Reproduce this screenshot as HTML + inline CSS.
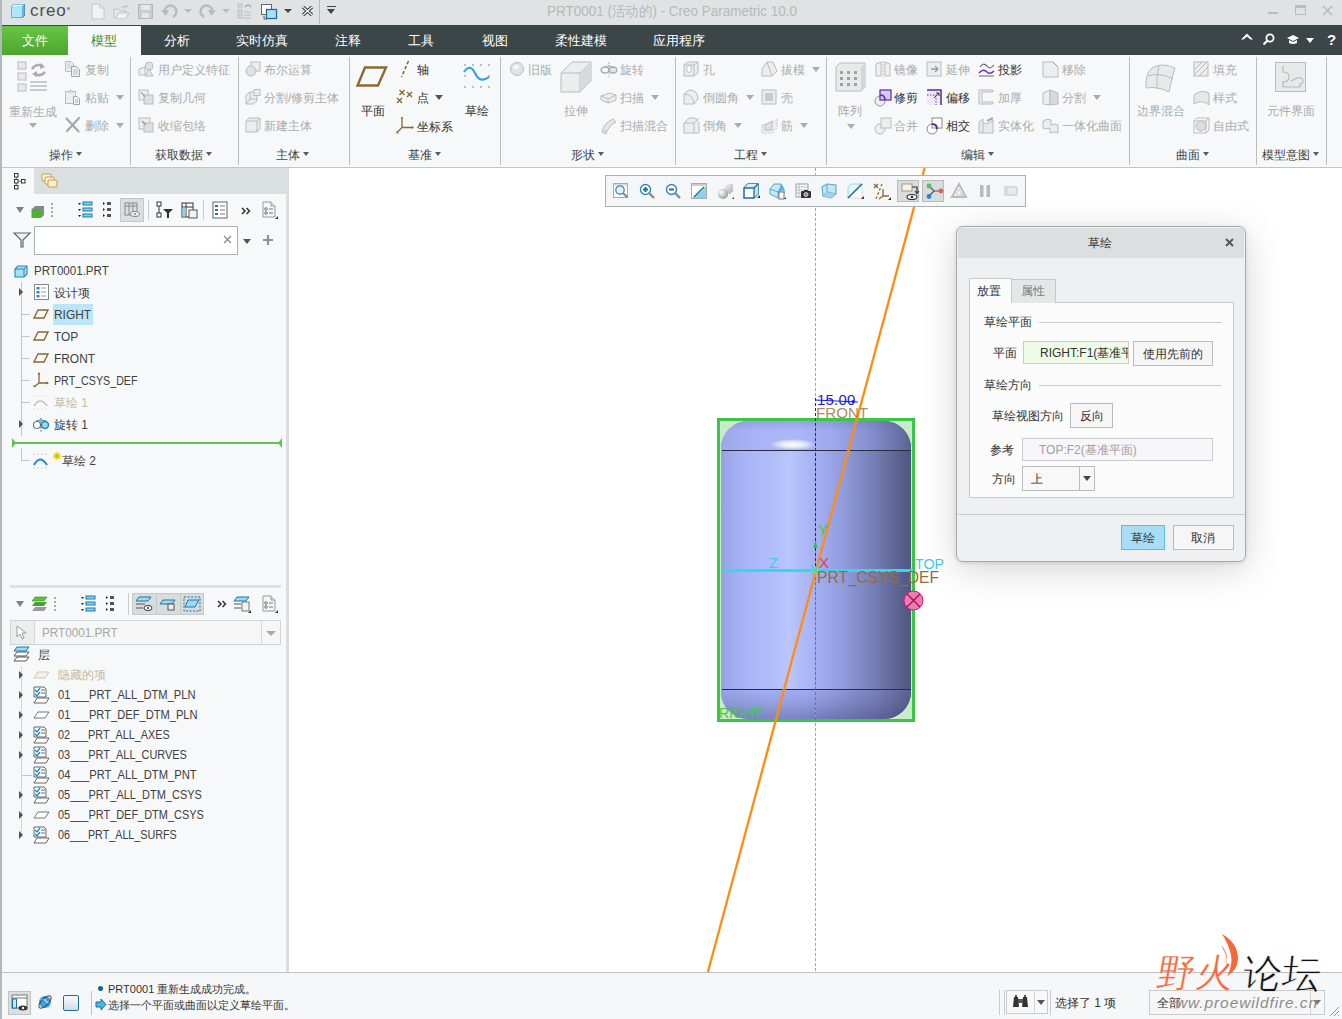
<!DOCTYPE html>
<html><head><meta charset="utf-8">
<style>
*{box-sizing:border-box;margin:0;padding:0}
html,body{width:1342px;height:1019px;overflow:hidden}
body{position:relative;background:#f5f7f8;font-family:"Liberation Sans",sans-serif;font-size:12px;color:#333}
.a{position:absolute}
.t{position:absolute;white-space:nowrap;line-height:14px;font-size:12px}
.tab{position:absolute;top:0;height:30px;line-height:32px;color:#fff;font-size:13px;white-space:nowrap}
.gl{position:absolute;font-size:12px;color:#444;white-space:nowrap;line-height:14px}
.dis{color:#a9adad}
svg{position:absolute;overflow:visible}
</style></head><body>
<div class="a" style="left:0px;top:0px;width:1342px;height:25px;background:#dfe3e3"></div>
<div class="a" style="left:0px;top:25px;width:1342px;height:30px;background:#3c4547"></div>
<div class="a" style="left:0px;top:55px;width:1342px;height:112px;background:#f6f8f9"></div>
<div class="a" style="left:0px;top:167px;width:1342px;height:1px;background:#bcc6c6"></div>
<div class="a" style="left:2px;top:168px;width:284px;height:804px;background:#f6f8f9"></div>
<div class="a" style="left:286px;top:168px;width:3px;height:804px;background:#dadede"></div>
<div class="a" style="left:289px;top:168px;width:1053px;height:804px;background:#ffffff"></div>
<div class="a" style="left:0px;top:972px;width:1342px;height:1px;background:#b9c3c3"></div>
<div class="a" style="left:2px;top:973px;width:1340px;height:46px;background:#f5f7f8"></div>
<div class="a" style="left:0px;top:0px;width:2px;height:1019px;background:#b3b8ba"></div>
<svg style="left:11px;top:3px" width="15" height="16" viewBox="0 0 15 16"><path d="M2.5 1 L14 1 L14 12.5 L11.5 15 L0.5 15 L0.5 3 Z" fill="#1f7fae"/><rect x="1" y="3" width="10.5" height="11.5" fill="#aee6f8"/><path d="M2.5 1.5 L13.5 1.5 L11.5 3 L1 3 Z" fill="#f4fbff"/><path d="M11.5 3 L13.5 1.5 L13.5 12 L11.5 14 Z" fill="#6fb6d6"/></svg>
<div class="t" style="left:30px;top:1px;font-size:17px;line-height:20px;color:#4a4f52;letter-spacing:0.9px">creo</div>
<div class="a" style="left:67px;top:7px;width:3px;height:3px;background:#8a8f92;border-radius:2px"></div>
<svg style="left:91px;top:3px" width="14" height="17" viewBox="0 0 14 17"><path d="M1 1 L9 1 L13 5 L13 16 L1 16 Z" fill="#f2f2f2" stroke="#c4c8c8"/><path d="M9 1 L9 5 L13 5" fill="none" stroke="#c4c8c8"/></svg>
<svg style="left:113px;top:4px" width="17" height="15" viewBox="0 0 17 15"><path d="M1 5 L6 5 L7 7 L13 7 L13 14 L1 14 Z" fill="#e8eaea" stroke="#bfc3c3"/><path d="M3 14 L5 9 L16 9 L13 14" fill="#f0f0f0" stroke="#bfc3c3"/><path d="M9 4 Q12 1 15 3" fill="none" stroke="#bfc3c3" stroke-width="1.5"/></svg>
<svg style="left:138px;top:4px" width="15" height="15" viewBox="0 0 15 15"><rect x="0.5" y="0.5" width="14" height="14" fill="#c9cdcd" stroke="#b4b8b8"/><rect x="3" y="1" width="9" height="5" fill="#e6e8e8"/><rect x="4" y="9" width="7" height="5" fill="#e6e8e8"/></svg>
<svg style="left:161px;top:5px" width="17" height="13" viewBox="0 0 17 13"><path d="M4 9 A6 6 0 1 1 12 12" fill="none" stroke="#b8bcbc" stroke-width="2.5"/><path d="M0 5 L5 11 L8 5 Z" fill="#b8bcbc"/></svg>
<div class="a" style="left:184px;top:9px;width:0;height:0;border-left:4px solid transparent;border-right:4px solid transparent;border-top:4px solid #b8bcbc"></div>
<svg style="left:199px;top:5px" width="17" height="13" viewBox="0 0 17 13"><path d="M13 9 A6 6 0 1 0 5 12" fill="none" stroke="#b8bcbc" stroke-width="2.5"/><path d="M17 5 L12 11 L9 5 Z" fill="#b8bcbc"/></svg>
<div class="a" style="left:222px;top:9px;width:0;height:0;border-left:4px solid transparent;border-right:4px solid transparent;border-top:4px solid #b8bcbc"></div>
<svg style="left:237px;top:3px" width="15" height="16" viewBox="0 0 15 16"><rect x="1" y="1" width="4" height="3" fill="none" stroke="#b8bcbc"/><rect x="1" y="7" width="4" height="3" fill="none" stroke="#b8bcbc"/><rect x="1" y="12" width="4" height="3" fill="none" stroke="#b8bcbc"/><path d="M7 9 L14 9 M7 12 L14 12 M7 15 L14 15" stroke="#b8bcbc"/><path d="M8 4 Q11 0 14 4" fill="none" stroke="#a8acac" stroke-width="1.5"/></svg>
<svg style="left:261px;top:4px" width="16" height="16" viewBox="0 0 16 16"><rect x="0.5" y="0.5" width="10" height="10" fill="#fff" stroke="#666"/><rect x="5.5" y="5.5" width="10" height="9" fill="#aee0f4" stroke="#1d6f9a" stroke-width="1.3"/><path d="M3 12 L3 15 L6 15" fill="none" stroke="#666"/></svg>
<div class="a" style="left:284px;top:9px;width:0;height:0;border-left:4px solid transparent;border-right:4px solid transparent;border-top:4px solid #444"></div>
<svg style="left:301px;top:5px" width="13" height="12" viewBox="0 0 13 12"><path d="M2 2 L11 10 M11 2 L2 10" stroke="#333" stroke-width="3.2"/><path d="M2 2 L11 10 M11 2 L2 10" stroke="#fff" stroke-width="1.2"/></svg>
<div class="a" style="left:319px;top:0px;width:1px;height:24px;background:#b5baba"></div>
<div class="a" style="left:327px;top:6px;width:9px;height:1px;background:#444"></div>
<div class="a" style="left:327px;top:9px;width:0;height:0;border-left:4px solid transparent;border-right:4px solid transparent;border-top:5px solid #444"></div>
<div class="t" style="left:547px;top:3px;font-size:14px;line-height:17px;color:#b4baba;transform:scaleX(0.9630);transform-origin:0 0">PRT0001 (活动的) - Creo Parametric 10.0</div>
<div class="a" style="left:1268px;top:12px;width:10px;height:2px;background:#b7bcbc"></div>
<div class="a" style="left:1295px;top:5px;width:11px;height:10px;border:1.5px solid #b7bcbc;border-top-width:3px"></div>
<svg style="left:1322px;top:5px" width="11" height="11" viewBox="0 0 11 11"><path d="M1 1 L10 10 M10 1 L1 10" stroke="#b7bcbc" stroke-width="1.6"/></svg>
<div class="a" style="left:2px;top:26px;width:66px;height:29px;background:linear-gradient(#67c545,#4ea42e)"></div>
<div class="tab" style="left:22px;top:25px">文件</div>
<div class="a" style="left:68px;top:26px;width:73px;height:29px;background:#f6f8f9"></div>
<div class="tab" style="left:91px;top:25px;color:#3f8a2c">模型</div>
<div class="tab" style="left:164px;top:25px">分析</div>
<div class="tab" style="left:236px;top:25px">实时仿真</div>
<div class="tab" style="left:335px;top:25px">注释</div>
<div class="tab" style="left:408px;top:25px">工具</div>
<div class="tab" style="left:482px;top:25px">视图</div>
<div class="tab" style="left:555px;top:25px">柔性建模</div>
<div class="tab" style="left:653px;top:25px">应用程序</div>
<svg style="left:1241px;top:33px" width="12" height="7" viewBox="0 0 12 7"><path d="M0 6.5 L6 0.5 L12 6.5 L9.5 6.5 L6 3.5 L2.5 6.5 Z" fill="#fff"/></svg>
<svg style="left:1262px;top:33px" width="13" height="13" viewBox="0 0 13 13"><circle cx="8" cy="5" r="3.6" fill="none" stroke="#fff" stroke-width="1.8"/><path d="M5.5 7.5 L1.5 11.5" stroke="#fff" stroke-width="2.2"/></svg>
<svg style="left:1286px;top:34px" width="14" height="11" viewBox="0 0 14 11"><path d="M1 4 L7 1 L13 4 L7 7 Z" fill="#fff"/><path d="M3 6 L3 9 Q7 11 11 9 L11 6 L7 8 Z" fill="#fff"/></svg>
<div class="a" style="left:1306px;top:38px;width:0;height:0;border-left:4px solid transparent;border-right:4px solid transparent;border-top:5px solid #fff"></div>
<div class="t" style="left:1327px;top:32px;font-size:15px;line-height:16px;color:#fff;font-weight:bold">?</div>
<svg style="left:17px;top:60px" width="32" height="34" viewBox="0 0 32 34"><rect x="1" y="2" width="8" height="7" fill="#e8eaea" stroke="#b8bcbc"/><rect x="1" y="13" width="8" height="7" fill="#e8eaea" stroke="#b8bcbc"/><rect x="1" y="24" width="8" height="7" fill="#e8eaea" stroke="#b8bcbc"/><path d="M13 22 L30 22 M13 26 L30 26 M13 30 L30 30" stroke="#b8bcbc" stroke-width="1.5"/><path d="M15 9 Q19 3 26 6" fill="none" stroke="#a8acac" stroke-width="2.5"/><path d="M28 12 Q24 17 17 14" fill="none" stroke="#a8acac" stroke-width="2.5"/><path d="M23 3 L28 7 L23 9 Z M20 11 L15 14 L20 17 Z" fill="#a8acac"/></svg>
<div class="t dis" style="left:9px;top:105px;">重新生成</div>
<div class="a" style="left:29px;top:123px;width:0;height:0;border-left:4px solid transparent;border-right:4px solid transparent;border-top:5px solid #a8acac"></div>
<svg style="left:65px;top:61px" width="16" height="16" viewBox="0 0 16 16"><path d="M0.5 0.5 L6 0.5 L8.5 3 L8.5 10.5 L0.5 10.5 Z" fill="#eceeee" stroke="#b8bcbc"/><path d="M2 3 L6 3 M2 5 L7 5 M2 7 L7 7" stroke="#ccc"/><path d="M6.5 5.5 L11.5 5.5 L14.5 8.5 L14.5 15.5 L6.5 15.5 Z" fill="#f0f1f1" stroke="#a0a4a4"/><path d="M8 9 L13 9 M8 11 L13 11 M8 13 L13 13" stroke="#b8bcbc"/></svg>
<div class="t dis" style="left:85px;top:63px;">复制</div>
<svg style="left:65px;top:89px" width="16" height="16" viewBox="0 0 16 16"><rect x="0.5" y="2.5" width="10" height="12" fill="#eceeee" stroke="#b8bcbc"/><path d="M3 3 L5.5 0.5 L8 3 Z" fill="#f4f4f4" stroke="#b8bcbc"/><path d="M8.5 7.5 L12 7.5 L14.5 10 L14.5 15.5 L8.5 15.5 Z" fill="#f2f3f3" stroke="#a0a4a4"/><path d="M10 11 L13 11 M10 13 L13 13" stroke="#b0b4b4"/></svg>
<div class="t dis" style="left:85px;top:91px;">粘贴</div>
<div class="a" style="left:116px;top:95px;width:0;height:0;border-left:4px solid transparent;border-right:4px solid transparent;border-top:5px solid #a8acac"></div>
<svg style="left:65px;top:117px" width="16" height="16" viewBox="0 0 16 16"><path d="M1.5 1.5 L13.5 14.5 M14 1 L2 14" stroke="#a4a8a8" stroke-width="2.2" stroke-linecap="round"/></svg>
<div class="t dis" style="left:85px;top:119px;">删除</div>
<div class="a" style="left:116px;top:123px;width:0;height:0;border-left:4px solid transparent;border-right:4px solid transparent;border-top:5px solid #a8acac"></div>
<svg style="left:138px;top:61px" width="16" height="16" viewBox="0 0 16 16"><path d="M1 8 L7 6 L7 14 L1 14 Z" fill="#eceeee" stroke="#b8bcbc"/><circle cx="11" cy="5" r="4" fill="#e0e2e2" stroke="#b8bcbc"/><path d="M7 15 L11 8 L15 15 Z" fill="#e4e6e6" stroke="#b8bcbc"/></svg>
<div class="t dis" style="left:158px;top:63px;">用户定义特征</div>
<svg style="left:138px;top:89px" width="16" height="16" viewBox="0 0 16 16"><rect x="1" y="1" width="9" height="10" fill="#eceeee" stroke="#b8bcbc"/><rect x="6" y="6" width="9" height="9" fill="#dde0e0" stroke="#b8bcbc"/><path d="M3 3 L7 8" stroke="#999" stroke-width="1.2"/></svg>
<div class="t dis" style="left:158px;top:91px;">复制几何</div>
<svg style="left:138px;top:117px" width="16" height="16" viewBox="0 0 16 16"><rect x="1" y="1" width="11" height="11" fill="#eceeee" stroke="#b8bcbc"/><rect x="6" y="6" width="9" height="9" fill="#dde0e0" stroke="#b8bcbc"/><path d="M4 4 L8 8" stroke="#999" stroke-width="1.2"/></svg>
<div class="t dis" style="left:158px;top:119px;">收缩包络</div>
<svg style="left:245px;top:61px" width="16" height="16" viewBox="0 0 16 16"><rect x="6" y="1" width="9" height="9" fill="#eceeee" stroke="#b8bcbc"/><circle cx="6" cy="10" r="5" fill="#dfe1e1" stroke="#b8bcbc"/></svg>
<div class="t dis" style="left:264px;top:63px;">布尔运算</div>
<svg style="left:245px;top:89px" width="16" height="16" viewBox="0 0 16 16"><path d="M1 6 L5 3 L12 3 L12 12 L8 15 L1 15 Z" fill="#eceeee" stroke="#b8bcbc"/><path d="M5 3 L5 10 L1 15 M5 10 L12 10" fill="none" stroke="#b8bcbc"/><rect x="9" y="0.5" width="6" height="6" fill="#eceeee" stroke="#b8bcbc"/></svg>
<div class="t dis" style="left:264px;top:91px;">分割/修剪主体</div>
<svg style="left:245px;top:117px" width="16" height="16" viewBox="0 0 16 16"><path d="M1 4 L4 1 L15 1 L15 12 L12 15 L1 15 Z" fill="#eceeee" stroke="#b8bcbc"/><path d="M1 4 L12 4 L12 15 M12 4 L15 1" fill="none" stroke="#b8bcbc"/></svg>
<div class="t dis" style="left:264px;top:119px;">新建主体</div>
<svg style="left:356px;top:66px" width="32" height="21" viewBox="0 0 32 21"><path d="M9 1.5 L30 1.5 L22 19.5 L1.5 19.5 Z" fill="none" stroke="#8b6a2c" stroke-width="2.4"/></svg>
<div class="t " style="left:361px;top:104px;">平面</div>
<svg style="left:400px;top:60px" width="10" height="18" viewBox="0 0 10 18"><path d="M8.5 1 L1.5 17" stroke="#8b6a2c" stroke-width="1.6" stroke-dasharray="3.5 2"/></svg>
<div class="t " style="left:417px;top:63px;">轴</div>
<svg style="left:396px;top:89px" width="17" height="15" viewBox="0 0 17 15"><path d="M3.5 1 L8.5 6 M8.5 1 L3.5 6 M11 3 L16 8 M16 3 L11 8 M1 9 L6 14 M6 9 L1 14" stroke="#8b6a2c" stroke-width="1.4"/></svg>
<div class="t " style="left:417px;top:91px;">点</div>
<div class="a" style="left:435px;top:95px;width:0;height:0;border-left:4px solid transparent;border-right:4px solid transparent;border-top:5px solid #555"></div>
<svg style="left:396px;top:116px" width="19" height="19" viewBox="0 0 19 19"><path d="M6 2 L6 11.5 L17 11.5 M6 11.5 L1 16.5" fill="none" stroke="#8b6a2c" stroke-width="1.3"/><path d="M4.5 2.5 L6 0.5 L7.5 2.5 Z M16 10 L18 11.5 L16 13 Z M0.5 15 L0.5 17.5 L3 17.5 Z" fill="#8b6a2c"/></svg>
<div class="t " style="left:417px;top:120px;">坐标系</div>
<svg style="left:463px;top:63px" width="28" height="26" viewBox="0 0 28 26"><g fill="#7a7a7a"><circle cx="2" cy="2" r="0.8"/><circle cx="10" cy="2" r="0.8"/><circle cx="18" cy="2" r="0.8"/><circle cx="26" cy="2" r="0.8"/><circle cx="2" cy="13" r="0.8"/><circle cx="26" cy="13" r="0.8"/><circle cx="2" cy="24" r="0.8"/><circle cx="10" cy="24" r="0.8"/><circle cx="18" cy="24" r="0.8"/><circle cx="26" cy="24" r="0.8"/></g><path d="M1 9 Q7 0 12 10 Q17 21 26 14" fill="none" stroke="#33a3d8" stroke-width="2.2"/></svg>
<div class="t " style="left:465px;top:104px;">草绘</div>
<svg style="left:509px;top:61px" width="16" height="16" viewBox="0 0 16 16"><circle cx="8" cy="8" r="6.5" fill="#e2e4e4" stroke="#b8bcbc"/><ellipse cx="7" cy="6" rx="3" ry="2" fill="#f6f6f6"/></svg>
<div class="t dis" style="left:528px;top:63px;">旧版</div>
<svg style="left:560px;top:61px" width="32" height="32" viewBox="0 0 32 32"><path d="M1 12 L12 1 L31 1 L31 20 L20 31 L1 31 Z" fill="#eceeee" stroke="#b8bcbc"/><path d="M1 12 L20 12 L31 1 M20 12 L20 31" fill="none" stroke="#b8bcbc"/><path d="M20 12 L31 1 L31 20 L20 31 Z" fill="#d7dada"/></svg>
<div class="t dis" style="left:564px;top:104px;">拉伸</div>
<svg style="left:600px;top:61px" width="18" height="16" viewBox="0 0 18 16"><ellipse cx="5" cy="9" rx="4" ry="3" fill="none" stroke="#a8acac" stroke-width="1.3"/><ellipse cx="13" cy="9" rx="4" ry="3" fill="#e2e4e4" stroke="#a8acac" stroke-width="1.3"/><path d="M9 1 L9 16" stroke="#a8acac" stroke-dasharray="2 1.5"/><path d="M5 6 Q9 3 13 6" fill="none" stroke="#a8acac"/></svg>
<div class="t dis" style="left:620px;top:63px;">旋转</div>
<svg style="left:600px;top:89px" width="18" height="16" viewBox="0 0 18 16"><path d="M1 7 L10 4 L16 6 L16 11 L8 14 L1 11 Z" fill="#eceeee" stroke="#b8bcbc"/><path d="M1 7 L8 10 L16 6 M8 10 L8 14" fill="none" stroke="#b8bcbc"/></svg>
<div class="t dis" style="left:620px;top:91px;">扫描</div>
<div class="a" style="left:651px;top:95px;width:0;height:0;border-left:4px solid transparent;border-right:4px solid transparent;border-top:5px solid #a8acac"></div>
<svg style="left:600px;top:117px" width="17" height="18" viewBox="0 0 17 18"><path d="M2 15 Q4 6 13 2 L16 5 Q8 9 6 17 Z" fill="#e4e6e6" stroke="#b8bcbc"/><circle cx="5" cy="14" r="1" fill="#b8bcbc"/></svg>
<div class="t dis" style="left:620px;top:119px;">扫描混合</div>
<svg style="left:683px;top:61px" width="17" height="16" viewBox="0 0 17 16"><path d="M1 4 L5 1 L15 1 L15 12 L11 15 L1 15 Z" fill="#eceeee" stroke="#b8bcbc"/><path d="M1 4 L11 4 L11 15 M11 4 L15 1" fill="none" stroke="#b8bcbc"/><ellipse cx="6" cy="8" rx="2.5" ry="3.5" fill="#fff" stroke="#b8bcbc"/></svg>
<div class="t dis" style="left:703px;top:63px;">孔</div>
<svg style="left:683px;top:89px" width="17" height="17" viewBox="0 0 17 17"><path d="M1 5 L6 1 Q15 1 15 10 L11 15 L1 15 Z" fill="#eceeee" stroke="#b8bcbc"/><path d="M1 5 Q10 5 11 15" fill="none" stroke="#b8bcbc"/></svg>
<div class="t dis" style="left:703px;top:91px;">倒圆角</div>
<div class="a" style="left:746px;top:95px;width:0;height:0;border-left:4px solid transparent;border-right:4px solid transparent;border-top:5px solid #a8acac"></div>
<svg style="left:683px;top:117px" width="17" height="17" viewBox="0 0 17 17"><path d="M1 6 L6 1 L12 1 L16 6 L16 16 L1 16 Z" fill="#eceeee" stroke="#b8bcbc"/><path d="M1 6 L11 6 L16 1 M11 6 L11 16" fill="none" stroke="#b8bcbc"/></svg>
<div class="t dis" style="left:703px;top:119px;">倒角</div>
<div class="a" style="left:734px;top:123px;width:0;height:0;border-left:4px solid transparent;border-right:4px solid transparent;border-top:5px solid #a8acac"></div>
<svg style="left:761px;top:61px" width="17" height="16" viewBox="0 0 17 16"><path d="M1 8 L6 1 L12 1 L16 10 L11 15 L1 15 Z" fill="#eceeee" stroke="#b8bcbc"/><path d="M6 1 L11 15" stroke="#b8bcbc" fill="none"/></svg>
<div class="t dis" style="left:781px;top:63px;">拔模</div>
<div class="a" style="left:812px;top:67px;width:0;height:0;border-left:4px solid transparent;border-right:4px solid transparent;border-top:5px solid #a8acac"></div>
<svg style="left:761px;top:89px" width="16" height="16" viewBox="0 0 16 16"><rect x="1" y="1" width="14" height="14" fill="#eceeee" stroke="#b8bcbc"/><rect x="4" y="4" width="8" height="8" fill="#c8cbcb"/></svg>
<div class="t dis" style="left:781px;top:91px;">壳</div>
<svg style="left:761px;top:117px" width="17" height="17" viewBox="0 0 17 17"><path d="M1 8 L1 16 L11 16 L16 11 L16 2 L11 6 Z" fill="#eceeee" stroke="#b8bcbc" stroke-dasharray="1 1"/><path d="M4 8 L11 4 L11 13 L4 13 Z" fill="#dfe1e1" stroke="#b8bcbc"/></svg>
<div class="t dis" style="left:781px;top:119px;">筋</div>
<div class="a" style="left:800px;top:123px;width:0;height:0;border-left:4px solid transparent;border-right:4px solid transparent;border-top:5px solid #a8acac"></div>
<svg style="left:835px;top:62px" width="31" height="30" viewBox="0 0 31 30"><path d="M1 5 L5 1 L30 1 L30 25 L26 29 L1 29 Z" fill="#e8eaea" stroke="#b8bcbc"/><path d="M26 5 L30 1 L30 25 L26 29 Z" fill="#d4d7d7"/><g fill="#9ea2a2"><rect x="5" y="9" width="3" height="3"/><rect x="12" y="9" width="3" height="3"/><rect x="19" y="9" width="3" height="3"/><rect x="5" y="15" width="3" height="3"/><rect x="12" y="15" width="3" height="3"/><rect x="19" y="15" width="3" height="3"/><rect x="5" y="21" width="3" height="3"/><rect x="12" y="21" width="3" height="3"/><rect x="19" y="21" width="3" height="3"/></g></svg>
<div class="t dis" style="left:838px;top:104px;">阵列</div>
<div class="a" style="left:847px;top:124px;width:0;height:0;border-left:4px solid transparent;border-right:4px solid transparent;border-top:5px solid #a8acac"></div>
<svg style="left:875px;top:61px" width="16" height="16" viewBox="0 0 16 16"><path d="M1 3 L6 1 L6 15 L1 15 Z M15 3 L10 1 L10 15 L15 15 Z" fill="#f0f0f0" stroke="#b8bcbc"/><path d="M8 0 L8 16" stroke="#b8bcbc" stroke-dasharray="2 1"/></svg>
<div class="t dis" style="left:894px;top:63px;">镜像</div>
<svg style="left:874px;top:89px" width="18" height="18" viewBox="0 0 18 18"><circle cx="6" cy="12" r="5" fill="#eee" stroke="#999"/><rect x="6" y="1" width="11" height="10" fill="#d7c8f5" stroke="#5a2a9a" stroke-width="1.2"/><path d="M6 6 Q11 6 11 11" fill="none" stroke="#5a2a9a" stroke-width="1.5"/></svg>
<div class="t " style="left:894px;top:91px;">修剪</div>
<svg style="left:874px;top:117px" width="18" height="18" viewBox="0 0 18 18"><circle cx="6" cy="12" r="5" fill="#eee" stroke="#bbb"/><rect x="7" y="1" width="10" height="10" fill="#eee" stroke="#bbb"/></svg>
<div class="t dis" style="left:894px;top:119px;">合并</div>
<svg style="left:926px;top:61px" width="16" height="16" viewBox="0 0 16 16"><rect x="1" y="1" width="14" height="14" fill="#eceeee" stroke="#b8bcbc"/><path d="M5 8 L12 8 M9 5 L12 8 L9 11" fill="none" stroke="#999" stroke-width="1.3"/></svg>
<div class="t dis" style="left:946px;top:63px;">延伸</div>
<svg style="left:926px;top:89px" width="17" height="17" viewBox="0 0 17 17"><rect x="1" y="1" width="15" height="15" fill="#efe8fb" stroke="none"/><path d="M1 1 L15 1 L15 16" fill="none" stroke="#5a2a9a" stroke-width="1.5"/><path d="M1 6 L10 6 L10 16" fill="none" stroke="#555" stroke-dasharray="1.5 1.5"/><path d="M8 9 L13 4 M10 4 L13 4 L13 7" fill="none" stroke="#333"/></svg>
<div class="t " style="left:946px;top:91px;">偏移</div>
<svg style="left:926px;top:117px" width="17" height="18" viewBox="0 0 17 18"><circle cx="6" cy="12" r="5" fill="#fff" stroke="#888"/><rect x="6" y="1" width="10" height="10" fill="#fff" stroke="#888"/><path d="M6 7 Q11 7 11 12" fill="none" stroke="#5a2a9a" stroke-width="2"/></svg>
<div class="t " style="left:946px;top:119px;">相交</div>
<svg style="left:978px;top:61px" width="18" height="17" viewBox="0 0 18 17"><path d="M2 6 Q5 1 9 5 Q12 9 16 4" fill="none" stroke="#666" stroke-width="1.2"/><path d="M1 12 Q5 7 9 11 Q12 14 16 10" fill="none" stroke="#7a2ac0" stroke-width="1.5"/><path d="M1 15 L16 15" stroke="#666"/></svg>
<div class="t " style="left:998px;top:63px;">投影</div>
<svg style="left:978px;top:89px" width="16" height="16" viewBox="0 0 16 16"><path d="M1 1 L15 1 L15 3 L4 3 L4 13 L15 13 L15 15 L1 15 Z" fill="#eceeee" stroke="#b8bcbc"/></svg>
<div class="t dis" style="left:998px;top:91px;">加厚</div>
<svg style="left:978px;top:117px" width="17" height="17" viewBox="0 0 17 17"><path d="M1 5 L5 2 L5 16 L1 16 Z M5 16 L15 16 L15 3 Q10 8 5 6" fill="#e8eaea" stroke="#b8bcbc"/><path d="M9 4 L15 1" stroke="#a8acac" stroke-width="2"/></svg>
<div class="t dis" style="left:998px;top:119px;">实体化</div>
<svg style="left:1042px;top:61px" width="17" height="17" viewBox="0 0 17 17"><path d="M1 1 L11 1 L16 6 L16 16 L1 16 Z" fill="#eceeee" stroke="#b8bcbc"/><path d="M11 1 L16 6" stroke="#999"/></svg>
<div class="t dis" style="left:1062px;top:63px;">移除</div>
<svg style="left:1042px;top:89px" width="17" height="17" viewBox="0 0 17 17"><path d="M1 4 L8 1 L8 16 L1 15 Z" fill="#eceeee" stroke="#b8bcbc"/><path d="M8 1 L16 4 L16 15 L8 16 Z" fill="#d8dada" stroke="#b8bcbc"/></svg>
<div class="t dis" style="left:1062px;top:91px;">分割</div>
<div class="a" style="left:1093px;top:95px;width:0;height:0;border-left:4px solid transparent;border-right:4px solid transparent;border-top:5px solid #a8acac"></div>
<svg style="left:1042px;top:117px" width="17" height="17" viewBox="0 0 17 17"><path d="M1 4 Q5 1 9 3 L9 8 Q13 6 16 8 L16 16 Q12 14 8 16 L8 11 Q4 13 1 11 Z" fill="#eceeee" stroke="#b8bcbc"/></svg>
<div class="t dis" style="left:1062px;top:119px;">一体化曲面</div>
<svg style="left:1144px;top:62px" width="33" height="31" viewBox="0 0 33 31"><path d="M2 26 Q1 12 8 6 Q18 0 31 6 Q27 18 25 30 Q14 24 2 26 Z" fill="#e8eaea" stroke="#b8bcbc"/><path d="M15 3 Q12 15 13 27 M4 14 Q16 10 29 17" fill="none" stroke="#b8bcbc"/></svg>
<div class="t dis" style="left:1137px;top:104px;">边界混合</div>
<svg style="left:1193px;top:61px" width="16" height="16" viewBox="0 0 16 16"><rect x="1" y="1" width="14" height="14" fill="#eceeee" stroke="#b8bcbc"/><path d="M1 9 L9 1 M1 14 L14 1 M6 15 L15 6" stroke="#b8bcbc"/></svg>
<div class="t dis" style="left:1213px;top:63px;">填充</div>
<svg style="left:1193px;top:89px" width="17" height="17" viewBox="0 0 17 17"><path d="M1 15 L1 6 Q8 0 16 4 L16 16 Q9 10 1 15 Z" fill="#e6e8e8" stroke="#b8bcbc"/></svg>
<div class="t dis" style="left:1213px;top:91px;">样式</div>
<svg style="left:1193px;top:117px" width="17" height="17" viewBox="0 0 17 17"><rect x="1" y="4" width="12" height="12" fill="none" stroke="#b8bcbc"/><path d="M1 4 L4 1 L16 1 L16 13 L13 16 M13 4 L16 1" fill="none" stroke="#b8bcbc"/><circle cx="8" cy="9" r="5" fill="#dcdede" stroke="#b8bcbc"/></svg>
<div class="t dis" style="left:1213px;top:119px;">自由式</div>
<svg style="left:1275px;top:62px" width="31" height="30" viewBox="0 0 31 30"><rect x="0.5" y="0.5" width="30" height="29" fill="#e8eaea" stroke="#b8bcbc"/><path d="M8 4 L8 10 Q14 10 14 15 Q14 20 8 20 L8 25 L25 25 L25 22 Q28 22 28 18 Q26 14 20 17 L16 19" fill="none" stroke="#b5b9b9" stroke-width="1.2"/></svg>
<div class="t dis" style="left:1267px;top:104px;">元件界面</div>
<div class="gl" style="left:49px;top:148px">操作</div>
<div class="a" style="left:76px;top:152px;width:0;height:0;border-left:3.5px solid transparent;border-right:3.5px solid transparent;border-top:4px solid #5c5c5c"></div>
<div class="gl" style="left:155px;top:148px">获取数据</div>
<div class="a" style="left:206px;top:152px;width:0;height:0;border-left:3.5px solid transparent;border-right:3.5px solid transparent;border-top:4px solid #5c5c5c"></div>
<div class="gl" style="left:276px;top:148px">主体</div>
<div class="a" style="left:303px;top:152px;width:0;height:0;border-left:3.5px solid transparent;border-right:3.5px solid transparent;border-top:4px solid #5c5c5c"></div>
<div class="gl" style="left:408px;top:148px">基准</div>
<div class="a" style="left:435px;top:152px;width:0;height:0;border-left:3.5px solid transparent;border-right:3.5px solid transparent;border-top:4px solid #5c5c5c"></div>
<div class="gl" style="left:571px;top:148px">形状</div>
<div class="a" style="left:598px;top:152px;width:0;height:0;border-left:3.5px solid transparent;border-right:3.5px solid transparent;border-top:4px solid #5c5c5c"></div>
<div class="gl" style="left:734px;top:148px">工程</div>
<div class="a" style="left:761px;top:152px;width:0;height:0;border-left:3.5px solid transparent;border-right:3.5px solid transparent;border-top:4px solid #5c5c5c"></div>
<div class="gl" style="left:961px;top:148px">编辑</div>
<div class="a" style="left:988px;top:152px;width:0;height:0;border-left:3.5px solid transparent;border-right:3.5px solid transparent;border-top:4px solid #5c5c5c"></div>
<div class="gl" style="left:1176px;top:148px">曲面</div>
<div class="a" style="left:1203px;top:152px;width:0;height:0;border-left:3.5px solid transparent;border-right:3.5px solid transparent;border-top:4px solid #5c5c5c"></div>
<div class="gl" style="left:1262px;top:148px">模型意图</div>
<div class="a" style="left:1313px;top:152px;width:0;height:0;border-left:3.5px solid transparent;border-right:3.5px solid transparent;border-top:4px solid #5c5c5c"></div>
<div class="a" style="left:130px;top:57px;width:1px;height:108px;background:#b9bfbf"></div>
<div class="a" style="left:238px;top:57px;width:1px;height:108px;background:#b9bfbf"></div>
<div class="a" style="left:349px;top:57px;width:1px;height:108px;background:#b9bfbf"></div>
<div class="a" style="left:500px;top:57px;width:1px;height:108px;background:#b9bfbf"></div>
<div class="a" style="left:675px;top:57px;width:1px;height:108px;background:#b9bfbf"></div>
<div class="a" style="left:826px;top:57px;width:1px;height:108px;background:#b9bfbf"></div>
<div class="a" style="left:1129px;top:57px;width:1px;height:108px;background:#b9bfbf"></div>
<div class="a" style="left:1256px;top:57px;width:1px;height:108px;background:#b9bfbf"></div>
<div class="a" style="left:1326px;top:57px;width:1px;height:108px;background:#b9bfbf"></div>
<div class="a" style="left:34px;top:168px;width:252px;height:26px;background:#dadfdf"></div>
<svg style="left:13px;top:172px" width="13" height="18" viewBox="0 0 13 18"><g fill="#fff" stroke="#333" stroke-width="1"><rect x="1.5" y="1.5" width="3.5" height="3.5"/><rect x="1.5" y="7.5" width="3.5" height="3.5"/><rect x="1.5" y="13.5" width="3.5" height="3.5"/><rect x="8.5" y="7.5" width="3.5" height="3.5"/></g><path d="M3.25 5 L3.25 7.5 M3.25 11 L3.25 13.5 M5 9.25 L8.5 9.25" stroke="#555" stroke-width="0.8"/></svg>
<svg style="left:41px;top:173px" width="17" height="16" viewBox="0 0 17 16"><rect x="1" y="1" width="9" height="7" rx="1" fill="#fdf3dc" stroke="#c89a4a"/><rect x="4" y="4" width="9" height="7" rx="1" fill="#fdf3dc" stroke="#c89a4a"/><rect x="7" y="7" width="9" height="7" rx="1" fill="#fdf0d0" stroke="#c89a4a"/></svg>
<div class="a" style="left:16px;top:207px;width:0;height:0;border-left:4px solid transparent;border-right:4px solid transparent;border-top:6px solid #808080"></div>
<svg style="left:31px;top:205px" width="14" height="14" viewBox="0 0 14 14"><path d="M1 4 L4 1 L13 1 L13 10 L10 13 L1 13 Z" fill="#888"/><rect x="0.5" y="4" width="9.5" height="9" fill="#4cb03a"/></svg>
<svg style="left:51px;top:203px" width="3" height="15" viewBox="0 0 3 15"><g fill="#aaa"><rect x="0" y="0" width="2" height="2"/><rect x="0" y="4" width="2" height="2"/><rect x="0" y="8" width="2" height="2"/><rect x="0" y="12" width="2" height="2"/></g></svg>
<svg style="left:77px;top:201px" width="16" height="18" viewBox="0 0 16 18"><g fill="#7fd4f2" stroke="#1b78a8"><rect x="6" y="1" width="9" height="3"/><rect x="6" y="7" width="9" height="3"/><rect x="6" y="13" width="9" height="3"/></g><path d="M1 2 L4 2 L2.5 4 Z M1 8 L4 8 L2.5 10 Z M1 14 L4 14 L2.5 16 Z" fill="#222"/></svg>
<svg style="left:102px;top:201px" width="10" height="18" viewBox="0 0 10 18"><g fill="#555"><rect x="5" y="1" width="4" height="3"/><rect x="5" y="7" width="4" height="3"/><rect x="5" y="13" width="4" height="3"/></g><path d="M1 1 L3 2.5 L1 4 Z M1 7 L3 8.5 L1 10 Z M1 13 L3 14.5 L1 16 Z" fill="#222"/></svg>
<div class="a" style="left:120px;top:198px;width:24px;height:24px;background:#dcdfe0;border:1px solid #c2c6c6"></div>
<svg style="left:124px;top:202px" width="16" height="16" viewBox="0 0 16 16"><rect x="1" y="1" width="12" height="12" fill="none" stroke="#888"/><path d="M1 4 L13 4 M5 1 L5 13 M9 1 L9 13" stroke="#888"/><ellipse cx="11" cy="12" rx="4.5" ry="2.5" fill="#eee" stroke="#888"/><circle cx="11" cy="12" r="1" fill="#888"/></svg>
<div class="a" style="left:148px;top:200px;width:1px;height:20px;background:#c8cccc"></div>
<svg style="left:156px;top:201px" width="18" height="18" viewBox="0 0 18 18"><rect x="1" y="1" width="4" height="4" fill="#fff" stroke="#333"/><rect x="1" y="12" width="4" height="4" fill="#fff" stroke="#333"/><path d="M3 5 L3 12" stroke="#333"/><path d="M7 8 L17 8 L13 12 L13 17 L11 17 L11 12 Z" fill="#333"/></svg>
<svg style="left:181px;top:202px" width="17" height="17" viewBox="0 0 17 17"><rect x="1" y="1" width="11" height="14" fill="#fff" stroke="#333"/><path d="M1 5 L12 5 M5 1 L5 15" stroke="#333"/><rect x="1.5" y="5.5" width="3" height="9" fill="#8fd4ee"/><rect x="8" y="8" width="8" height="8" fill="#f4f4f4" stroke="#555"/></svg>
<div class="a" style="left:203px;top:200px;width:1px;height:20px;background:#c8cccc"></div>
<svg style="left:212px;top:201px" width="16" height="18" viewBox="0 0 16 18"><rect x="1" y="1" width="14" height="16" fill="#fff" stroke="#666"/><g fill="#1b78a8"><rect x="3" y="4" width="3" height="2"/><rect x="3" y="8" width="3" height="2"/><rect x="3" y="12" width="3" height="2"/></g><path d="M8 5 L13 5 M8 9 L13 9 M8 13 L13 13" stroke="#777"/></svg>
<svg style="left:241px;top:207px" width="10" height="8" viewBox="0 0 10 8"><path d="M1 1 L4 4 L1 7 M5.5 1 L8.5 4 L5.5 7" fill="none" stroke="#333" stroke-width="1.5"/></svg>
<svg style="left:262px;top:201px" width="16" height="19" viewBox="0 0 16 19"><path d="M1 1 L9 1 L13 5 L13 16 L1 16 Z" fill="#f4f6f7" stroke="#999"/><path d="M9 1 L9 5 L13 5" fill="#d8e6ee" stroke="#999"/><circle cx="4" cy="8" r="1.3" fill="none" stroke="#777"/><circle cx="4" cy="12" r="1.3" fill="none" stroke="#777"/><path d="M7 8 L11 8 M7 12 L11 12" stroke="#777"/><path d="M13 18 L16 18 L16 15 Z" fill="#333"/></svg>
<svg style="left:13px;top:232px" width="18" height="16" viewBox="0 0 18 16"><path d="M1 1 L17 1 L10 8 L10 15 L8 15 L8 8 Z" fill="#f0f0f0" stroke="#666" stroke-width="1.2"/></svg>
<div class="a" style="left:34px;top:226px;width:204px;height:29px;background:#fff;border:1px solid #aab4b4"></div>
<svg style="left:223px;top:235px" width="9" height="9" viewBox="0 0 9 9"><path d="M1 1 L8 8 M8 1 L1 8" stroke="#888" stroke-width="1.2"/></svg>
<div class="a" style="left:243px;top:239px;width:0;height:0;border-left:4px solid transparent;border-right:4px solid transparent;border-top:5px solid #555"></div>
<svg style="left:262px;top:234px" width="12" height="12" viewBox="0 0 12 12"><path d="M6 1 L6 11 M1 6 L11 6" stroke="#909090" stroke-width="2.2"/></svg>
<svg style="left:14px;top:265px" width="14" height="13" viewBox="0 0 14 13"><path d="M1 4 L4 1 L13 1 L13 9 L10 12 L1 12 Z" fill="#a9e0f4" stroke="#2787b8" stroke-width="1.1"/><path d="M1 4 L10 4 L10 12 M10 4 L13 1" fill="none" stroke="#2787b8"/></svg>
<div class="t" style="left:34px;top:264px;font-size:12px;line-height:14px;color:#404040;transform:scaleX(0.9638);transform-origin:0 0">PRT0001.PRT</div>
<div class="a" style="left:21px;top:282px;width:1px;height:154px;background:#c2c6c6"></div>
<svg style="left:19px;top:288px" width="4" height="8" viewBox="0 0 4 8"><path d="M0 0 L4 4 L0 8 Z" fill="#505050"/></svg>
<svg style="left:34px;top:284px" width="15" height="16" viewBox="0 0 15 16"><rect x="0.5" y="0.5" width="14" height="15" fill="#fff" stroke="#888"/><g fill="#2a86c6"><rect x="2.5" y="3" width="3" height="2.5"/><rect x="2.5" y="7" width="3" height="2.5"/><rect x="2.5" y="11" width="3" height="2.5"/></g><path d="M7 4 L12 4 M7 8 L12 8 M7 12 L12 12" stroke="#999"/></svg>
<div class="t" style="left:54px;top:286px;font-size:12px;line-height:14px;color:#404040">设计项</div>
<div class="a" style="left:22px;top:314px;width:8px;height:1px;background:#c2c6c6"></div>
<svg style="left:33px;top:309px" width="16" height="10" viewBox="0 0 16 10"><path d="M5 1 L15 1 L11 9 L1 9 Z" fill="none" stroke="#8b6a2c" stroke-width="1.4"/></svg>
<div class="a" style="left:53px;top:304px;width:40px;height:21px;background:#bde5f9"></div>
<div class="t" style="left:54px;top:308px;font-size:12px;line-height:14px;color:#404040;transform:scaleX(0.9908);transform-origin:0 0">RIGHT</div>
<div class="a" style="left:22px;top:336px;width:8px;height:1px;background:#c2c6c6"></div>
<svg style="left:33px;top:331px" width="16" height="10" viewBox="0 0 16 10"><path d="M5 1 L15 1 L11 9 L1 9 Z" fill="none" stroke="#8b6a2c" stroke-width="1.4"/></svg>
<div class="t" style="left:54px;top:330px;font-size:12px;line-height:14px;color:#404040;transform:scaleX(0.9937);transform-origin:0 0">TOP</div>
<div class="a" style="left:22px;top:358px;width:8px;height:1px;background:#c2c6c6"></div>
<svg style="left:33px;top:353px" width="16" height="10" viewBox="0 0 16 10"><path d="M5 1 L15 1 L11 9 L1 9 Z" fill="none" stroke="#8b6a2c" stroke-width="1.4"/></svg>
<div class="t" style="left:54px;top:352px;font-size:12px;line-height:14px;color:#404040;transform:scaleX(0.9921);transform-origin:0 0">FRONT</div>
<div class="a" style="left:22px;top:380px;width:8px;height:1px;background:#c2c6c6"></div>
<svg style="left:33px;top:372px" width="16" height="16" viewBox="0 0 16 16"><path d="M6 1 L6 11 L15 11 M6 11 L1 15" fill="none" stroke="#8b6a2c" stroke-width="1.3"/><path d="M4.5 2.5 L6 0 L7.5 2.5 Z M13 9.5 L16 11 L13 12.5 Z M0 14 L2.5 15.5 L1 13 Z" fill="#8b6a2c"/></svg>
<div class="t" style="left:54px;top:374px;font-size:12px;line-height:14px;color:#404040;transform:scaleX(0.8901);transform-origin:0 0">PRT_CSYS_DEF</div>
<div class="a" style="left:22px;top:402px;width:8px;height:1px;background:#c2c6c6"></div>
<svg style="left:33px;top:395px" width="16" height="16" viewBox="0 0 16 16"><g fill="#c8c8c8"><circle cx="1" cy="1" r="0.6"/><circle cx="5" cy="1" r="0.6"/><circle cx="9" cy="1" r="0.6"/><circle cx="13" cy="1" r="0.6"/><circle cx="1" cy="14" r="0.6"/><circle cx="5" cy="14" r="0.6"/><circle cx="9" cy="14" r="0.6"/><circle cx="13" cy="14" r="0.6"/></g><path d="M1 11 Q7 1 14 11" fill="none" stroke="#c9c2b2" stroke-width="1.6"/></svg>
<div class="t" style="left:54px;top:396px;font-size:12px;line-height:14px;color:#c4b9a4">草绘 1</div>
<svg style="left:19px;top:420px" width="4" height="8" viewBox="0 0 4 8"><path d="M0 0 L4 4 L0 8 Z" fill="#505050"/></svg>
<svg style="left:32px;top:417px" width="18" height="15" viewBox="0 0 18 15"><circle cx="5" cy="8" r="3.5" fill="#fff" stroke="#777" stroke-width="1.2"/><circle cx="13" cy="8" r="3.5" fill="#9ed7f0" stroke="#2787b8" stroke-width="1.4"/><path d="M9 1 L9 15" stroke="#555" stroke-dasharray="1.5 1.5"/><path d="M4 4 Q9 2 14 4" fill="none" stroke="#2787b8"/></svg>
<div class="t" style="left:54px;top:418px;font-size:12px;line-height:14px;color:#404040">旋转 1</div>
<div class="a" style="left:13px;top:442px;width:268px;height:2px;background:#5fc44a"></div>
<svg style="left:12px;top:438px" width="4" height="10" viewBox="0 0 4 10"><path d="M0 0 L4 5 L0 10 Z" fill="#5fc44a"/></svg>
<svg style="left:278px;top:438px" width="4" height="10" viewBox="0 0 4 10"><path d="M4 0 L0 5 L4 10 Z" fill="#5fc44a"/></svg>
<div class="a" style="left:21px;top:448px;width:1px;height:12px;background:#c2c6c6"></div>
<div class="a" style="left:21px;top:460px;width:9px;height:1px;background:#c2c6c6"></div>
<svg style="left:33px;top:453px" width="16" height="16" viewBox="0 0 16 16"><g fill="#9a9a9a"><circle cx="1" cy="1" r="0.6"/><circle cx="5" cy="1" r="0.6"/><circle cx="9" cy="1" r="0.6"/><circle cx="13" cy="1" r="0.6"/><circle cx="1" cy="15" r="0.6"/><circle cx="5" cy="15" r="0.6"/><circle cx="9" cy="15" r="0.6"/><circle cx="13" cy="15" r="0.6"/></g><path d="M1 12 Q7 1 14 12" fill="none" stroke="#2287c8" stroke-width="2"/></svg>
<svg style="left:53px;top:452px" width="8" height="8" viewBox="0 0 8 8"><path d="M4 0 L4 8 M0 4 L8 4 M1 1 L7 7 M7 1 L1 7" stroke="#e8d800" stroke-width="1.3"/><path d="M4 1.5 L4 6.5 M1.5 4 L6.5 4" stroke="#b8a000" stroke-width="0.6"/></svg>
<div class="t" style="left:62px;top:454px;font-size:12px;line-height:14px;color:#404040">草绘 2</div>
<div class="a" style="left:10px;top:585px;width:271px;height:3px;background:#dde1e1"></div>
<div class="a" style="left:16px;top:601px;width:0;height:0;border-left:4px solid transparent;border-right:4px solid transparent;border-top:6px solid #808080"></div>
<svg style="left:31px;top:596px" width="17" height="16" viewBox="0 0 17 16"><path d="M4 1 L16 1 L13 5 L1 5 Z" fill="#5cc040" stroke="#3a8a2a" stroke-width="0.6"/><path d="M4 6 L16 6 L13 10 L1 10 Z" fill="#4aa036"/><path d="M4 11 L16 11 L13 15 L1 15 Z" fill="#9a9a9a"/></svg>
<svg style="left:54px;top:597px" width="3" height="15" viewBox="0 0 3 15"><g fill="#aaa"><rect x="0" y="0" width="2" height="2"/><rect x="0" y="4" width="2" height="2"/><rect x="0" y="8" width="2" height="2"/><rect x="0" y="12" width="2" height="2"/></g></svg>
<svg style="left:80px;top:595px" width="16" height="18" viewBox="0 0 16 18"><g fill="#7fd4f2" stroke="#1b78a8"><rect x="6" y="1" width="9" height="3"/><rect x="6" y="7" width="9" height="3"/><rect x="6" y="13" width="9" height="3"/></g><path d="M1 2 L4 2 L2.5 4 Z M1 8 L4 8 L2.5 10 Z M1 14 L4 14 L2.5 16 Z" fill="#222"/></svg>
<svg style="left:105px;top:595px" width="10" height="18" viewBox="0 0 10 18"><g fill="#555"><rect x="5" y="1" width="4" height="3"/><rect x="5" y="7" width="4" height="3"/><rect x="5" y="13" width="4" height="3"/></g><path d="M1 1 L3 2.5 L1 4 Z M1 7 L3 8.5 L1 10 Z M1 13 L3 14.5 L1 16 Z" fill="#222"/></svg>
<div class="a" style="left:128px;top:593px;width:1px;height:22px;background:#c8cccc"></div>
<div class="a" style="left:132px;top:593px;width:72px;height:22px;background:#d9dcdd;border:1px solid #c4c8c8"></div>
<div class="a" style="left:156px;top:593px;width:1px;height:22px;background:#c4c8c8"></div>
<div class="a" style="left:180px;top:593px;width:1px;height:22px;background:#c4c8c8"></div>
<svg style="left:135px;top:596px" width="18" height="16" viewBox="0 0 18 16"><path d="M4 1 L16 1 L13 5 L1 5 Z" fill="#9fd8ef" stroke="#1b78a8"/><path d="M1 8 L10 8 M1 12 L8 12" stroke="#555"/><ellipse cx="13" cy="12" rx="4" ry="2.5" fill="#fff" stroke="#333"/><circle cx="13" cy="12" r="1" fill="#333"/></svg>
<svg style="left:159px;top:596px" width="18" height="16" viewBox="0 0 18 16"><path d="M4 4 L16 4 L13 8 L1 8 Z" fill="#9fd8ef" stroke="#1b78a8"/><rect x="9" y="8" width="6" height="6" fill="#eee" stroke="#555"/></svg>
<svg style="left:183px;top:596px" width="18" height="16" viewBox="0 0 18 16"><rect x="1" y="1" width="16" height="14" fill="none" stroke="#1b78a8" stroke-dasharray="2 1.5"/><path d="M5 4 L16 4 L12 11 L2 11 Z" fill="#9fd8ef" stroke="#1b78a8"/></svg>
<svg style="left:217px;top:600px" width="10" height="8" viewBox="0 0 10 8"><path d="M1 1 L4 4 L1 7 M5.5 1 L8.5 4 L5.5 7" fill="none" stroke="#333" stroke-width="1.5"/></svg>
<svg style="left:233px;top:596px" width="18" height="18" viewBox="0 0 18 18"><path d="M4 1 L16 1 L13 5 L1 5 Z" fill="#9fd8ef" stroke="#1b78a8"/><path d="M1 8 L8 8 M1 12 L8 12" stroke="#555"/><rect x="9" y="6" width="7" height="9" fill="#f4f4f4" stroke="#777"/><path d="M15 17 L18 17 L18 14 Z" fill="#333"/></svg>
<svg style="left:262px;top:595px" width="16" height="19" viewBox="0 0 16 19"><path d="M1 1 L9 1 L13 5 L13 16 L1 16 Z" fill="#f4f6f7" stroke="#999"/><path d="M9 1 L9 5 L13 5" fill="#d8e6ee" stroke="#999"/><circle cx="4" cy="8" r="1.3" fill="none" stroke="#777"/><circle cx="4" cy="12" r="1.3" fill="none" stroke="#777"/><path d="M7 8 L11 8 M7 12 L11 12" stroke="#777"/><path d="M13 18 L16 18 L16 15 Z" fill="#333"/></svg>
<div class="a" style="left:10px;top:620px;width:271px;height:25px;background:#f6f6f6;border:1px solid #cfd3d3"></div>
<div class="a" style="left:34px;top:621px;width:1px;height:23px;background:#d6d9d9"></div>
<div class="a" style="left:11px;top:621px;width:23px;height:23px;background:#eceeee"></div>
<svg style="left:16px;top:625px" width="10" height="15" viewBox="0 0 10 15"><path d="M1 1 L1 12 L4 9 L6 14 L8 13 L6 8 L10 8 Z" fill="#fff" stroke="#999"/></svg>
<div class="a" style="left:261px;top:621px;width:1px;height:23px;background:#d6d9d9"></div>
<div class="a" style="left:266px;top:631px;width:0;height:0;border-left:5px solid transparent;border-right:5px solid transparent;border-top:5px solid #aaa"></div>
<div class="t" style="left:42px;top:626px;font-size:12px;line-height:14px;color:#a3a7a7;transform:scaleX(0.9741);transform-origin:0 0">PRT0001.PRT</div>
<svg style="left:13px;top:646px" width="17" height="16" viewBox="0 0 17 16"><path d="M4 1 L16 1 L13 5 L1 5 Z" fill="#9fd8ef" stroke="#1b78a8"/><path d="M4 6 L16 6 L13 10 L1 10 Z" fill="#fff" stroke="#555"/><path d="M4 11 L16 11 L13 15 L1 15 Z" fill="#fff" stroke="#555"/></svg>
<div class="t" style="left:38px;top:648px;font-size:12px;line-height:14px;color:#404040">层</div>
<div class="a" style="left:21px;top:667px;width:1px;height:166px;background:#d2d6d6"></div>
<svg style="left:19px;top:671px" width="4" height="8" viewBox="0 0 4 8"><path d="M0 0 L4 4 L0 8 Z" fill="#505050"/></svg>
<svg style="left:33px;top:671px" width="17" height="8" viewBox="0 0 17 8"><path d="M5 1 L16 1 L12 7 L1 7 Z" fill="#f4f0e4" stroke="#d0c8b0"/></svg>
<div class="t" style="left:58px;top:668px;font-size:12px;line-height:14px;color:#c6baa2">隐藏的项</div>
<svg style="left:19px;top:691px" width="4" height="8" viewBox="0 0 4 8"><path d="M0 0 L4 4 L0 8 Z" fill="#505050"/></svg>
<svg style="left:33px;top:686px" width="17" height="18" viewBox="0 0 17 18"><path d="M1 1 L11 1 L13 3 L13 11 L1 11 Z" fill="#fff" stroke="#666"/><path d="M2 4 L4 6 L7 2" fill="none" stroke="#1b88c8" stroke-width="1.3"/><path d="M2 8 L4 10 L7 6" fill="none" stroke="#1b88c8" stroke-width="1.3"/><path d="M8 4 L12 4 M8 7 L12 7" stroke="#666"/><path d="M4 12 L16 12 L13 17 L1 17 Z" fill="#fff" stroke="#666"/></svg>
<div class="t" style="left:58px;top:688px;font-size:12px;line-height:14px;color:#404040;transform:scaleX(0.9305);transform-origin:0 0">01___PRT_ALL_DTM_PLN</div>
<svg style="left:19px;top:711px" width="4" height="8" viewBox="0 0 4 8"><path d="M0 0 L4 4 L0 8 Z" fill="#505050"/></svg>
<svg style="left:33px;top:711px" width="17" height="8" viewBox="0 0 17 8"><path d="M5 1 L16 1 L12 7 L1 7 Z" fill="#fff" stroke="#777"/></svg>
<div class="t" style="left:58px;top:708px;font-size:12px;line-height:14px;color:#404040;transform:scaleX(0.9275);transform-origin:0 0">01___PRT_DEF_DTM_PLN</div>
<svg style="left:19px;top:731px" width="4" height="8" viewBox="0 0 4 8"><path d="M0 0 L4 4 L0 8 Z" fill="#505050"/></svg>
<svg style="left:33px;top:726px" width="17" height="18" viewBox="0 0 17 18"><path d="M1 1 L11 1 L13 3 L13 11 L1 11 Z" fill="#fff" stroke="#666"/><path d="M2 4 L4 6 L7 2" fill="none" stroke="#1b88c8" stroke-width="1.3"/><path d="M2 8 L4 10 L7 6" fill="none" stroke="#1b88c8" stroke-width="1.3"/><path d="M8 4 L12 4 M8 7 L12 7" stroke="#666"/><path d="M4 12 L16 12 L13 17 L1 17 Z" fill="#fff" stroke="#666"/></svg>
<div class="t" style="left:58px;top:728px;font-size:12px;line-height:14px;color:#404040;transform:scaleX(0.9017);transform-origin:0 0">02___PRT_ALL_AXES</div>
<svg style="left:19px;top:751px" width="4" height="8" viewBox="0 0 4 8"><path d="M0 0 L4 4 L0 8 Z" fill="#505050"/></svg>
<svg style="left:33px;top:746px" width="17" height="18" viewBox="0 0 17 18"><path d="M1 1 L11 1 L13 3 L13 11 L1 11 Z" fill="#fff" stroke="#666"/><path d="M2 4 L4 6 L7 2" fill="none" stroke="#1b88c8" stroke-width="1.3"/><path d="M2 8 L4 10 L7 6" fill="none" stroke="#1b88c8" stroke-width="1.3"/><path d="M8 4 L12 4 M8 7 L12 7" stroke="#666"/><path d="M4 12 L16 12 L13 17 L1 17 Z" fill="#fff" stroke="#666"/></svg>
<div class="t" style="left:58px;top:748px;font-size:12px;line-height:14px;color:#404040;transform:scaleX(0.9092);transform-origin:0 0">03___PRT_ALL_CURVES</div>
<div class="a" style="left:22px;top:775px;width:10px;height:1px;background:#c2c6c6"></div>
<svg style="left:33px;top:766px" width="17" height="18" viewBox="0 0 17 18"><path d="M1 1 L11 1 L13 3 L13 11 L1 11 Z" fill="#fff" stroke="#666"/><path d="M2 4 L4 6 L7 2" fill="none" stroke="#1b88c8" stroke-width="1.3"/><path d="M2 8 L4 10 L7 6" fill="none" stroke="#1b88c8" stroke-width="1.3"/><path d="M8 4 L12 4 M8 7 L12 7" stroke="#666"/><path d="M4 12 L16 12 L13 17 L1 17 Z" fill="#fff" stroke="#666"/></svg>
<div class="t" style="left:58px;top:768px;font-size:12px;line-height:14px;color:#404040;transform:scaleX(0.9338);transform-origin:0 0">04___PRT_ALL_DTM_PNT</div>
<svg style="left:19px;top:791px" width="4" height="8" viewBox="0 0 4 8"><path d="M0 0 L4 4 L0 8 Z" fill="#505050"/></svg>
<svg style="left:33px;top:786px" width="17" height="18" viewBox="0 0 17 18"><path d="M1 1 L11 1 L13 3 L13 11 L1 11 Z" fill="#fff" stroke="#666"/><path d="M2 4 L4 6 L7 2" fill="none" stroke="#1b88c8" stroke-width="1.3"/><path d="M2 8 L4 10 L7 6" fill="none" stroke="#1b88c8" stroke-width="1.3"/><path d="M8 4 L12 4 M8 7 L12 7" stroke="#666"/><path d="M4 12 L16 12 L13 17 L1 17 Z" fill="#fff" stroke="#666"/></svg>
<div class="t" style="left:58px;top:788px;font-size:12px;line-height:14px;color:#404040;transform:scaleX(0.9154);transform-origin:0 0">05___PRT_ALL_DTM_CSYS</div>
<svg style="left:19px;top:811px" width="4" height="8" viewBox="0 0 4 8"><path d="M0 0 L4 4 L0 8 Z" fill="#505050"/></svg>
<svg style="left:33px;top:811px" width="17" height="8" viewBox="0 0 17 8"><path d="M5 1 L16 1 L12 7 L1 7 Z" fill="#fff" stroke="#777"/></svg>
<div class="t" style="left:58px;top:808px;font-size:12px;line-height:14px;color:#404040;transform:scaleX(0.9121);transform-origin:0 0">05___PRT_DEF_DTM_CSYS</div>
<svg style="left:19px;top:831px" width="4" height="8" viewBox="0 0 4 8"><path d="M0 0 L4 4 L0 8 Z" fill="#505050"/></svg>
<svg style="left:33px;top:826px" width="17" height="18" viewBox="0 0 17 18"><path d="M1 1 L11 1 L13 3 L13 11 L1 11 Z" fill="#fff" stroke="#666"/><path d="M2 4 L4 6 L7 2" fill="none" stroke="#1b88c8" stroke-width="1.3"/><path d="M2 8 L4 10 L7 6" fill="none" stroke="#1b88c8" stroke-width="1.3"/><path d="M8 4 L12 4 M8 7 L12 7" stroke="#666"/><path d="M4 12 L16 12 L13 17 L1 17 Z" fill="#fff" stroke="#666"/></svg>
<div class="t" style="left:58px;top:828px;font-size:12px;line-height:14px;color:#404040;transform:scaleX(0.8964);transform-origin:0 0">06___PRT_ALL_SURFS</div>
<svg style="left:289px;top:168px" width="1053" height="804" viewBox="289 168 1053 804"><line x1="815.5" y1="168" x2="815.5" y2="972" stroke="#3ccfe0" stroke-width="1" stroke-dasharray="3 2"/></svg>
<div class="a" style="left:717px;top:418px;width:198px;height:304px;background:#c9ebc9;border:3px solid #3cc646"></div>
<div class="a" style="left:721px;top:421px;width:190px;height:298px;border-radius:27px;background:linear-gradient(90deg,#95a1e2 0%,#a6b2f5 10%,#b0bcfa 25%,#b9c5fd 36%,#a4b0f2 50%,#8e99da 66%,#7079ae 83%,#565d8a 96%,#50577f 100%)"></div>
<div class="a" style="left:721px;top:421px;width:190px;height:29px;border-radius:27px 27px 0 0;background:linear-gradient(180deg,rgba(70,80,140,0.18) 0px,rgba(0,0,0,0) 10px,rgba(0,0,0,0) 29px),linear-gradient(90deg,#9ca8ea 0%,#a8b4f6 18%,#abb7f8 40%,#9ea9ee 58%,#8790d0 78%,#6d75aa 92%,#5a6290 100%)"></div>
<div class="a" style="left:721px;top:690px;width:190px;height:29px;border-radius:0 0 27px 27px;background:linear-gradient(180deg,rgba(0,0,0,0) 0px,rgba(30,35,80,0.12) 14px,rgba(30,35,80,0.3) 29px),linear-gradient(90deg,#98a4e6 0%,#a4b0f2 25%,#a0acf0 45%,#8e98da 62%,#7880ba 82%,#5a6290 100%)"></div>
<div class="a" style="left:770px;top:439px;width:46px;height:11px;border-radius:50%;background:radial-gradient(ellipse at center,rgba(255,255,255,1) 0%,rgba(255,255,255,0.7) 35%,rgba(255,255,255,0) 72%)"></div>
<div class="a" style="left:722px;top:450px;width:189px;height:1px;background:#2a2c40"></div>
<div class="a" style="left:722px;top:689px;width:189px;height:1px;background:#2a2c40"></div>
<div class="a" style="left:721px;top:569px;width:192px;height:3px;background:#35d8e8"></div>
<svg style="left:289px;top:168px" width="1053" height="804" viewBox="289 168 1053 804"><line x1="815.5" y1="420" x2="815.5" y2="720" stroke="#3ccfe0" stroke-width="1"/><line x1="815.5" y1="398" x2="815.5" y2="568" stroke="#1a1ad8" stroke-width="1" stroke-dasharray="3 2"/><line x1="815.5" y1="572" x2="815.5" y2="722" stroke="#9a6a3c" stroke-width="1" stroke-dasharray="3 2"/><line x1="924.6" y1="168" x2="707.9" y2="972" stroke="#ff8c10" stroke-width="2.3"/><line x1="815" y1="400" x2="858" y2="402" stroke="#1a1ad8" stroke-width="1.2"/><circle cx="853" cy="401.5" r="1.5" fill="#1a1ad8"/><circle cx="913.5" cy="600.5" r="9.5" fill="#f07ab8" stroke="#c02060" stroke-width="1"/><path d="M907 594 L920 607 M920 594 L907 607" stroke="#a01040" stroke-width="1.2"/><circle cx="815.5" cy="570.5" r="2.5" fill="none" stroke="#d8c820" stroke-width="1.2"/><path d="M815.5 540 L813.5 548 L817.5 548 Z" fill="#20c040"/><path d="M811 565 L815.5 570 L811 575 M820 565 L815.5 570 L820 575" stroke="#35d8e8" stroke-width="1.5" fill="none"/></svg>
<div class="t" style="left:817px;top:392px;font-size:15px;line-height:15px;color:#1a1ad8;letter-spacing:0.2px;font-weight:normal">15.00</div>
<div class="t" style="left:816px;top:406px;font-size:14px;line-height:14px;color:#a8804e;transform:scaleX(1.08);transform-origin:0 0;opacity:0.9">FRONT</div>
<div class="t" style="left:915px;top:556px;font-size:15.5px;line-height:15.5px;color:#3ad0e4;transform:scaleX(0.92);transform-origin:0 0">TOP</div>
<div class="t" style="left:817px;top:570px;font-size:16px;line-height:16px;color:#9a6a3c;transform:scaleX(0.975);transform-origin:0 0">PRT_CSYS_DEF</div>
<div class="t" style="left:719px;top:706px;font-size:14px;line-height:14px;color:#46c850;">RIGHT</div>
<div class="t" style="left:769px;top:555px;font-size:15px;line-height:15px;color:#3ad0e4;">Z</div>
<div class="t" style="left:818px;top:522px;font-size:15px;line-height:15px;color:#3cc846;">Y</div>
<div class="t" style="left:819px;top:555px;font-size:15px;line-height:15px;color:#e04050;">X</div>
<div class="a" style="left:605px;top:175px;width:421px;height:32px;background:#f4f6f7;border:1px solid #a8b0b0"></div>
<div class="a" style="left:897px;top:180px;width:22px;height:22px;background:#d9dcdd;border:1px solid #b8bcbc"></div>
<div class="a" style="left:922px;top:180px;width:22px;height:22px;background:#d9dcdd;border:1px solid #b8bcbc"></div>
<svg style="left:613px;top:183px" width="17" height="17" viewBox="0 0 17 17"><rect x="0.5" y="0.5" width="14" height="14" fill="#fff" stroke="#aaa"/><rect x="1" y="1" width="13" height="2" fill="#ddd"/><circle cx="7" cy="7" r="4.2" fill="#dff2fb" stroke="#3a8ab8" stroke-width="1.3"/><path d="M10 10 L14.5 14.5" stroke="#8a8a8a" stroke-width="2.2"/></svg>
<svg style="left:639px;top:183px" width="17" height="17" viewBox="0 0 17 17"><circle cx="6.5" cy="6.5" r="5" fill="#fff" stroke="#2f86b6" stroke-width="1.4"/><path d="M4 6.5 L9 6.5 M6.5 4 L6.5 9" stroke="#1b6f9c" stroke-width="2"/><path d="M10.5 10.5 L15 15" stroke="#8a8a8a" stroke-width="2.4"/></svg>
<svg style="left:665px;top:183px" width="17" height="17" viewBox="0 0 17 17"><circle cx="6.5" cy="6.5" r="5" fill="#fff" stroke="#2f86b6" stroke-width="1.4"/><path d="M4 6.5 L9 6.5" stroke="#1b6f9c" stroke-width="2"/><path d="M10.5 10.5 L15 15" stroke="#8a8a8a" stroke-width="2.4"/></svg>
<svg style="left:691px;top:183px" width="17" height="17" viewBox="0 0 17 17"><rect x="0.5" y="0.5" width="15" height="15" fill="#fff" stroke="#aaa"/><rect x="1" y="1" width="14" height="2" fill="#ccc"/><path d="M1 15 Q9 11 15 3 L15 15 Z" fill="#8fd0ec"/><path d="M3 14 L13 4" stroke="#1b6f9c" stroke-width="1.4"/></svg>
<svg style="left:717px;top:183px" width="17" height="17" viewBox="0 0 17 17"><defs><radialGradient id="sg" cx="0.35" cy="0.35" r="0.7"><stop offset="0" stop-color="#fff"/><stop offset="1" stop-color="#9a9a9a"/></radialGradient><linearGradient id="cg" x1="0" y1="0" x2="1" y2="1"><stop offset="0" stop-color="#fafafa"/><stop offset="1" stop-color="#a8a8a8"/></linearGradient></defs><path d="M7 4 L10 1 L16 1 L16 8 L13 11 L7 11 Z" fill="url(#cg)"/><circle cx="6" cy="11" r="5" fill="url(#sg)"/><path d="M15 16 L17 16 L17 14 Z" fill="#333"/></svg>
<svg style="left:743px;top:183px" width="17" height="17" viewBox="0 0 17 17"><path d="M1 5 L5 1 L15 1 L15 11 L11 15 L1 15 Z" fill="#fff" stroke="#1b6f9c" stroke-width="1.5"/><path d="M11 5 L15 1 L15 11 L11 15 Z" fill="#bfe3f2"/><path d="M1 5 L5 1 L15 1 L11 5 Z" fill="#d8eef8"/><path d="M1 5 L11 5 L11 15 M11 5 L15 1" fill="none" stroke="#1b6f9c" stroke-width="1.3"/><path d="M14 15 L17 15 L17 12 Z" fill="#333"/></svg>
<svg style="left:769px;top:183px" width="17" height="17" viewBox="0 0 17 17"><path d="M1 6 L5 1 L12 1 L15 6 L15 11 L9 15 L1 11 Z" fill="#c8e8f6" stroke="#4aa6d0" stroke-width="1"/><path d="M1 6 L9 9 L15 6 M9 9 L9 15" fill="none" stroke="#4aa6d0"/><path d="M12 1 L15 6 L9 9 Z" fill="#5fb0d8"/><rect x="10" y="9" width="5" height="7" fill="#fff" stroke="#777"/><path d="M15 16 L17 16 L17 14 Z" fill="#333"/></svg>
<svg style="left:795px;top:183px" width="17" height="17" viewBox="0 0 17 17"><rect x="1" y="1" width="12" height="13" fill="#fff" stroke="#999"/><path d="M1 4 L13 4 M1 7 L13 7 M1 10 L13 10 M4 1 L4 14" stroke="#bbb"/><rect x="6" y="8" width="10" height="7" rx="1" fill="#333"/><rect x="9" y="7" width="4" height="2" fill="#333"/><circle cx="11" cy="11.5" r="2" fill="#888" stroke="#eee" stroke-width="0.8"/></svg>
<svg style="left:821px;top:183px" width="17" height="17" viewBox="0 0 17 17"><path d="M1 4 L6 1 L15 2 L15 11 L10 15 L2 13 Z" fill="#c4e6f4" stroke="#5fa9cc" stroke-width="1.1"/><path d="M6 1 L6 9 L2 13 M6 9 L15 11" fill="none" stroke="#5fa9cc"/><path d="M6 9 L15 11 L10 15 L2 13 Z" fill="#9fd2ea"/></svg>
<svg style="left:847px;top:183px" width="17" height="17" viewBox="0 0 17 17"><path d="M1 15 L15 1 L15 15 Z" fill="#fff" stroke="#bbb" stroke-dasharray="1 1"/><path d="M1 15 L1 4 L4 1 L15 1" fill="#eaf6fb" stroke="#9fd2ea"/><path d="M1 15 L15 1" stroke="#1b6f9c" stroke-width="1.6"/><path d="M14 16 L17 16 L17 13 Z" fill="#333"/></svg>
<svg style="left:873px;top:183px" width="17" height="17" viewBox="0 0 17 17"><path d="M1 1 L5 5 M5 1 L1 5" stroke="#8b6a2c" stroke-width="1.3"/><path d="M9 1 L3 16" stroke="#8b6a2c" stroke-width="1.3" stroke-dasharray="2.5 2"/><path d="M10 6 L10 13 L16 13 M10 13 L6 16" fill="none" stroke="#8b6a2c" stroke-width="1.3"/><path d="M15 17 L18 17 L18 14 Z" fill="#333"/></svg>
<svg style="left:901px;top:183px" width="17" height="17" viewBox="0 0 17 17"><rect x="1" y="1" width="10" height="7" fill="#fdf3d8" stroke="#999"/><path d="M11 4 L16 4 L16 10 M14 8 L16 10.5 L18 8" fill="none" stroke="#333" stroke-width="1.2"/><ellipse cx="11" cy="14" rx="5" ry="2.5" fill="#fff" stroke="#333" stroke-width="1.2"/><circle cx="11" cy="14" r="1.3" fill="#333"/></svg>
<svg style="left:926px;top:183px" width="17" height="17" viewBox="0 0 17 17"><path d="M3 3 L8 8 L15 8 M8 8 L3 13" stroke="#555" stroke-width="1.2" fill="none"/><circle cx="3" cy="3" r="2.4" fill="#60b860"/><circle cx="15" cy="8" r="2.4" fill="#e06060"/><circle cx="3" cy="13.5" r="2.4" fill="#2a86c6"/></svg>
<svg style="left:951px;top:183px" width="17" height="17" viewBox="0 0 17 17"><path d="M8 1 L15 14 L1 14 Z" fill="none" stroke="#bbb" stroke-width="2"/><path d="M8 6 L11 12 L5 12 Z" fill="none" stroke="#ccc"/><path d="M11 10 L15 12 L11 14 Z" fill="#ccc"/></svg>
<svg style="left:977px;top:183px" width="17" height="17" viewBox="0 0 17 17"><rect x="3" y="2" width="3.5" height="12" fill="#b8bcbc"/><rect x="9.5" y="2" width="3.5" height="12" fill="#b8bcbc"/></svg>
<svg style="left:1003px;top:183px" width="17" height="17" viewBox="0 0 17 17"><path d="M1 3 L14 3 Q16 8 14 13 L1 13 Z" fill="#d8dada"/><path d="M5 5 L13 5 L13 11 L5 11 Z" fill="#e8eaea"/></svg>
<div class="a" style="left:956px;top:226px;width:290px;height:336px;border-radius:7px;background:#eef0f1;border:1px solid #a8aaaa;box-shadow:0 8px 36px rgba(0,0,0,0.17),0 1px 4px rgba(0,0,0,0.12);overflow:hidden"><div class="a" style="left:1px;top:1px;width:286px;height:30px;background:#dcdfe0"></div></div>
<div class="t" style="left:1088px;top:236px;font-size:12px;line-height:14px;color:#333">草绘</div>
<svg style="left:1225px;top:238px" width="9" height="9" viewBox="0 0 9 9"><path d="M1 1 L8 8 M8 1 L1 8" stroke="#555" stroke-width="1.8"/></svg>
<div class="a" style="left:969px;top:302px;width:265px;height:196px;background:#fbfbfb;border:1px solid #c4c9c9"></div>
<div class="a" style="left:1011px;top:279px;width:45px;height:24px;background:#e4e7e7;border:1px solid #c4c9c9;border-bottom:none"></div>
<div class="a" style="left:969px;top:278px;width:43px;height:25px;background:#fbfbfb;border:1px solid #c4c9c9;border-bottom:none"></div>
<div class="t" style="left:977px;top:284px;font-size:12px;line-height:14px;color:#333">放置</div>
<div class="t" style="left:1021px;top:284px;font-size:12px;line-height:14px;color:#777">属性</div>
<div class="t" style="left:984px;top:315px;font-size:12px;line-height:14px;color:#333">草绘平面</div>
<div class="a" style="left:1039px;top:322px;width:183px;height:1px;background:#c8cccc"></div>
<div class="t" style="left:993px;top:346px;font-size:12px;line-height:14px;color:#333">平面</div>
<div class="a" style="left:1023px;top:341px;width:106px;height:23px;background:#eefbe6;border:1px solid #c8cccc;overflow:hidden"></div>
<div class="a" style="left:1024px;top:342px;width:104px;height:21px;overflow:hidden"><div class="t" style="left:16px;top:4px;font-size:12px;line-height:14px;color:#333">RIGHT:F1(基准平面)</div></div>
<div class="a" style="left:1133px;top:341px;width:80px;height:25px;background:#f6f6f6;border:1px solid #b8bcbc"></div>
<div class="t" style="left:1143px;top:347px;font-size:12px;line-height:14px;color:#333">使用先前的</div>
<div class="t" style="left:984px;top:378px;font-size:12px;line-height:14px;color:#333">草绘方向</div>
<div class="a" style="left:1039px;top:385px;width:183px;height:1px;background:#c8cccc"></div>
<div class="t" style="left:992px;top:409px;font-size:12px;line-height:14px;color:#333">草绘视图方向</div>
<div class="a" style="left:1070px;top:403px;width:43px;height:25px;background:#f6f6f6;border:1px solid #b8bcbc"></div>
<div class="t" style="left:1080px;top:409px;font-size:12px;line-height:14px;color:#333">反向</div>
<div class="t" style="left:990px;top:443px;font-size:12px;line-height:14px;color:#333">参考</div>
<div class="a" style="left:1022px;top:438px;width:191px;height:23px;background:#f8f6fb;border:1px solid #c8cccc"></div>
<div class="t" style="left:1039px;top:443px;font-size:12px;line-height:14px;color:#a0a0a0">TOP:F2(基准平面)</div>
<div class="t" style="left:992px;top:472px;font-size:12px;line-height:14px;color:#333">方向</div>
<div class="a" style="left:1022px;top:466px;width:73px;height:25px;background:#f8f8f8;border:1px solid #b8bcbc"></div>
<div class="a" style="left:1079px;top:467px;width:1px;height:23px;background:#b8bcbc"></div>
<div class="a" style="left:1083px;top:476px;width:0;height:0;border-left:4px solid transparent;border-right:4px solid transparent;border-top:5px solid #444"></div>
<div class="t" style="left:1031px;top:472px;font-size:12px;line-height:14px;color:#333">上</div>
<div class="a" style="left:958px;top:514px;width:287px;height:1px;background:#c8cccc"></div>
<div class="a" style="left:1121px;top:525px;width:44px;height:25px;background:#a8ddf8;border:1px solid #62b8e6"></div>
<div class="t" style="left:1131px;top:531px;font-size:12px;line-height:14px;color:#333">草绘</div>
<div class="a" style="left:1173px;top:525px;width:61px;height:25px;background:#f6f6f6;border:1px solid #b8bcbc"></div>
<div class="t" style="left:1191px;top:531px;font-size:12px;line-height:14px;color:#333">取消</div>
<div class="a" style="left:8px;top:991px;width:23px;height:24px;background:#dcdfe0;border:1px solid #c0c4c4"></div>
<svg style="left:11px;top:994px" width="17" height="17" viewBox="0 0 17 17"><rect x="1" y="1" width="15" height="13" fill="#fff" stroke="#777"/><path d="M1 4 L16 4" stroke="#777"/><rect x="1.5" y="5" width="4" height="9" fill="#cfe4ee" stroke="#1b6f9c"/><ellipse cx="12" cy="14" rx="4.5" ry="2.5" fill="#333"/><circle cx="12" cy="14" r="1.2" fill="#fff"/></svg>
<svg style="left:37px;top:994px" width="16" height="16" viewBox="0 0 16 16"><circle cx="8" cy="8" r="6" fill="#3aa0e0"/><path d="M4 6 Q7 4 9 7 Q11 10 13 8" fill="none" stroke="#bfe6fa" stroke-width="1.3"/><ellipse cx="8" cy="8" rx="8" ry="3.5" transform="rotate(-45 8 8)" fill="none" stroke="#444" stroke-width="1"/></svg>
<div class="a" style="left:63px;top:995px;width:16px;height:16px;background:linear-gradient(#f8fafb,#cfdde4);border:1.5px solid #1b6f9c;border-radius:2px"></div>
<div class="a" style="left:91px;top:991px;width:1px;height:24px;background:#c0c4c4"></div>
<div class="a" style="left:98px;top:986px;width:5px;height:5px;border-radius:50%;background:#1b5f8c"></div>
<div class="t" style="left:108px;top:982px;font-size:11px;line-height:14px;color:#333">PRT0001 重新生成成功完成。</div>
<svg style="left:95px;top:998px" width="12" height="13" viewBox="0 0 12 13"><path d="M1 4 L6 4 L6 1 L11 6.5 L6 12 L6 9 L1 9 Z" fill="#4ab8e8" stroke="#1b6f9c"/></svg>
<div class="t" style="left:108px;top:998px;font-size:11px;line-height:14px;color:#333">选择一个平面或曲面以定义草绘平面。</div>
<div class="a" style="left:999px;top:990px;width:1px;height:25px;background:#c8cccc"></div>
<div class="a" style="left:1004px;top:990px;width:1px;height:25px;background:#c8cccc"></div>
<div class="a" style="left:1006px;top:990px;width:42px;height:24px;background:#f8f8f8;border:1px solid #c8cccc"></div>
<div class="a" style="left:1034px;top:991px;width:1px;height:22px;background:#d0d4d4"></div>
<svg style="left:1012px;top:994px" width="17" height="14" viewBox="0 0 17 14"><path d="M2 3 L6 3 L7 13 L1 13 Z M11 3 L15 3 L16 13 L10 13 Z" fill="#333"/><rect x="6" y="5" width="5" height="4" fill="#555"/><path d="M3 1 L5 1 L5 3 L3 3 Z M12 1 L14 1 L14 3 L12 3 Z" fill="#555"/></svg>
<div class="a" style="left:1037px;top:1000px;width:0;height:0;border-left:4px solid transparent;border-right:4px solid transparent;border-top:5px solid #555"></div>
<div class="a" style="left:1050px;top:990px;width:1px;height:25px;background:#c8cccc"></div>
<div class="t" style="left:1055px;top:996px;font-size:12px;line-height:14px;color:#333">选择了 1 项</div>
<div class="a" style="left:1149px;top:990px;width:176px;height:25px;background:#f6f6f6;border:1px solid #c8cccc"></div>
<div class="a" style="left:1310px;top:991px;width:1px;height:23px;background:#d0d4d4"></div>
<div class="a" style="left:1313px;top:1000px;width:0;height:0;border-left:4px solid transparent;border-right:4px solid transparent;border-top:5px solid #777"></div>
<div class="t" style="left:1157px;top:996px;font-size:12px;line-height:14px;color:#333">全部</div>
<svg style="left:1328px;top:1005px" width="12" height="12" viewBox="0 0 12 12"><path d="M11 2 L2 11 M11 6 L6 11 M11 10 L10 11" stroke="#999" stroke-width="1"/></svg>
<div class="t" style="left:1176px;top:995px;font-size:15.5px;line-height:16px;color:#8c8c8c;font-style:italic;letter-spacing:0.9px">ww.proewildfire.cn</div>
<div class="t" style="left:1154px;top:953px;font-size:38px;line-height:40px;color:#f4683c;-webkit-text-stroke:0.35px #fcfdfd;transform:skewX(-10deg);transform-origin:0 100%;letter-spacing:1px">野火</div>
<svg style="left:1218px;top:933px" width="22" height="44" viewBox="0 0 22 44"><path d="M4 1 Q20 10 20 26 Q19 38 9 43 Q15 32 13 22 Q11 12 4 1 Z" fill="#f4683c"/><path d="M3 12 Q10 18 9 30 Q8 36 5 40 Q11 30 7 20 Z" fill="#f4683c" opacity="0.8"/></svg>
<div class="t" style="left:1241px;top:953px;font-size:39px;line-height:42px;color:#111;-webkit-text-stroke:0.6px #fcfdfd;transform:skewX(-6deg);transform-origin:0 100%">论坛</div>
</body></html>
